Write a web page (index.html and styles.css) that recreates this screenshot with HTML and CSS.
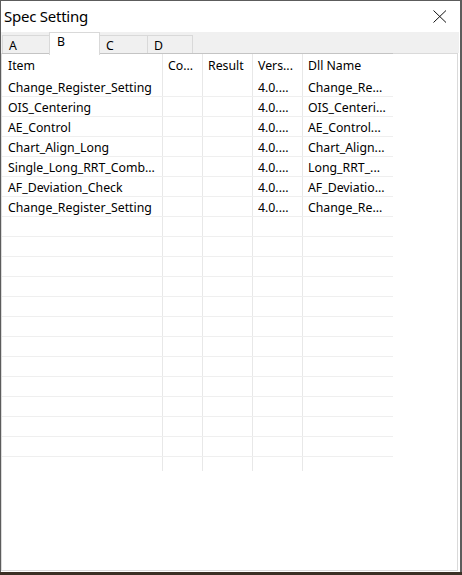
FILE: index.html
```html
<!DOCTYPE html>
<html>
<head>
<meta charset="utf-8">
<link rel="stylesheet" href="styles.css">
</head>
<body>
<div class="window">
  <div class="titlebar">
    <span class="title">Spec Setting</span>
    <svg class="close" width="14" height="13" viewBox="0 0 14 13"><path d="M0.5 0.5 L13 12.5 M13 0.5 L0.5 12.5" stroke="#111" stroke-width="1" fill="none"/></svg>
  </div>
  <div class="tabs">
    <div class="tab">A</div>
    <div class="tab active">B</div>
    <div class="tab">C</div>
    <div class="tab last">D</div>
  </div>
  <div class="page">
    <div class="list">
      <div class="row head">
        <div class="c c1">Item</div><div class="c c2">Co...</div><div class="c c3">Result</div><div class="c c4">Vers...</div><div class="c c5">Dll Name</div>
      </div>
      <div class="row"><div class="c c1">Change_Register_Setting</div><div class="c c2"></div><div class="c c3"></div><div class="c c4">4.0....</div><div class="c c5">Change_Re...</div></div>
      <div class="row"><div class="c c1">OIS_Centering</div><div class="c c2"></div><div class="c c3"></div><div class="c c4">4.0....</div><div class="c c5">OIS_Centeri...</div></div>
      <div class="row"><div class="c c1">AE_Control</div><div class="c c2"></div><div class="c c3"></div><div class="c c4">4.0....</div><div class="c c5">AE_Control...</div></div>
      <div class="row"><div class="c c1">Chart_Align_Long</div><div class="c c2"></div><div class="c c3"></div><div class="c c4">4.0....</div><div class="c c5">Chart_Align...</div></div>
      <div class="row"><div class="c c1">Single_Long_RRT_Comb...</div><div class="c c2"></div><div class="c c3"></div><div class="c c4">4.0....</div><div class="c c5">Long_RRT_...</div></div>
      <div class="row"><div class="c c1">AF_Deviation_Check</div><div class="c c2"></div><div class="c c3"></div><div class="c c4">4.0....</div><div class="c c5">AF_Deviatio...</div></div>
      <div class="row"><div class="c c1">Change_Register_Setting</div><div class="c c2"></div><div class="c c3"></div><div class="c c4">4.0....</div><div class="c c5">Change_Re...</div></div>
      <div class="row"><div class="c c1"></div><div class="c c2"></div><div class="c c3"></div><div class="c c4"></div><div class="c c5"></div></div>
      <div class="row"><div class="c c1"></div><div class="c c2"></div><div class="c c3"></div><div class="c c4"></div><div class="c c5"></div></div>
      <div class="row"><div class="c c1"></div><div class="c c2"></div><div class="c c3"></div><div class="c c4"></div><div class="c c5"></div></div>
      <div class="row"><div class="c c1"></div><div class="c c2"></div><div class="c c3"></div><div class="c c4"></div><div class="c c5"></div></div>
      <div class="row"><div class="c c1"></div><div class="c c2"></div><div class="c c3"></div><div class="c c4"></div><div class="c c5"></div></div>
      <div class="row"><div class="c c1"></div><div class="c c2"></div><div class="c c3"></div><div class="c c4"></div><div class="c c5"></div></div>
      <div class="row"><div class="c c1"></div><div class="c c2"></div><div class="c c3"></div><div class="c c4"></div><div class="c c5"></div></div>
      <div class="row"><div class="c c1"></div><div class="c c2"></div><div class="c c3"></div><div class="c c4"></div><div class="c c5"></div></div>
      <div class="row"><div class="c c1"></div><div class="c c2"></div><div class="c c3"></div><div class="c c4"></div><div class="c c5"></div></div>
      <div class="row"><div class="c c1"></div><div class="c c2"></div><div class="c c3"></div><div class="c c4"></div><div class="c c5"></div></div>
      <div class="row"><div class="c c1"></div><div class="c c2"></div><div class="c c3"></div><div class="c c4"></div><div class="c c5"></div></div>
      <div class="row"><div class="c c1"></div><div class="c c2"></div><div class="c c3"></div><div class="c c4"></div><div class="c c5"></div></div>
      <div class="row filler"><div class="c c1"></div><div class="c c2"></div><div class="c c3"></div><div class="c c4"></div><div class="c c5"></div></div>
    </div>
  </div>
</div>
</body>
</html>
```

FILE: styles.css
```css
* { box-sizing: border-box; }
html, body { margin: 0; padding: 0; }
body {
  width: 462px;
  height: 575px;
  background: #3b3025;
  font-family: "Noto Sans", "Open Sans", sans-serif;
  font-size: 12.3px;
  color: #000;
  overflow: hidden;
}
.window {
  width: 462px;
  height: 572px;
  background: #fff;
  border: 1px solid #5c5c5c;
  border-right-width: 2px;
  border-bottom: none;
  display: flex;
  flex-direction: column;
}
.titlebar {
  height: 31px;
  display: flex;
  align-items: center;
  justify-content: space-between;
  padding-left: 3px;
  padding-right: 13px;
}
.title {
  font-size: 15px;
  color: #000;
  letter-spacing: -0.25px;
  padding-bottom: 1px;
}
.close { display: block; }
.tabs {
  height: 21px;
  background: #f0f0f0;
  display: flex;
  align-items: flex-end;
  padding-left: 1px;
  margin-right: 1px;
}
.tab {
  width: 47px;
  height: 18px;
  border: 1px solid #d9d9d9;
  border-bottom: none;
  border-right: none;
  background: #f0f0f0;
  padding-left: 6px;
  padding-top: 1px;
  line-height: 18px;
}
.tab.last { width: 46px; border-right: 1px solid #d9d9d9; }
.tab.active {
  width: 51px;
  height: 23px;
  margin-bottom: -2px;
  background: #fff;
  border-right: 1px solid #d9d9d9;
  line-height: 17px;
  padding-left: 7px;
  padding-top: 0;
  z-index: 1;
}
.tab.active + .tab { border-left: none; }
.page {
  flex: 1;
  border: 1px solid #dadada;
  margin: 0 2px 1px 0;
  background: #fff;
}
.list {
  width: 391px;
  border-top: 1px solid #c4c4c4;
  margin-top: -1px;
}
.row {
  display: flex;
  height: 20px;
  border-bottom: 1px solid #efefef;
}
.row .c { padding-top: 1px; }
.row.head {
  height: 23px;
  border-bottom: none;
}
.row.head .c { padding-top: 0; }
.row.filler {
  height: 14px;
  border-bottom: none;
}
.c {
  height: 100%;
  border-right: 1px solid #e8e8e8;
  padding-left: 5px;
  white-space: nowrap;
  overflow: hidden;
  display: flex;
  align-items: center;
}
.c1 { width: 161px; padding-left: 6px; }
.c2 { width: 40px; }
.c3 { width: 50px; }
.c4 { width: 50px; }
.c5 { width: 90px; border-right: none; }
```
